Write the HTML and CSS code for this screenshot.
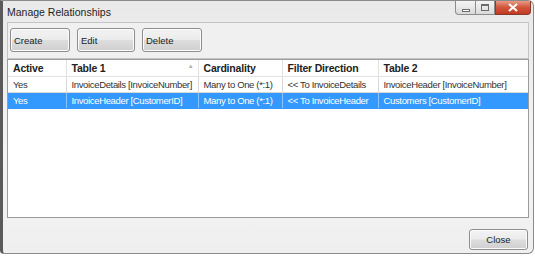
FILE: index.html
```html
<!DOCTYPE html>
<html lang="en">
  <head>
    <meta charset="UTF-8" />
    <title>Manage Relationships</title>
    <link rel="stylesheet" href="styles.css">
  </head>
  <body>
    <div class="window">
      <div class="titlebar">
        <span class="title">Manage Relationships</span>
        <div class="controls">
          <span class="ctl min"><i></i></span>
          <span class="ctl max"><i></i></span>
          <span class="ctl close">
            <svg width="12" height="9" viewBox="0 0 12 9"><path d="M2 1 L10 8 M10 1 L2 8" stroke="#fff" stroke-width="2.2"/></svg>
          </span>
        </div>
      </div>

      <div class="toolbar">
        <button class="btn">Create</button>
        <button class="btn narrow">Edit</button>
        <button class="btn">Delete</button>
      </div>

      <div class="grid">
        <table>
          <thead>
            <tr>
              <th class="c-active">Active</th>
              <th class="c-t1">Table 1 <span class="sort">&#9650;</span></th>
              <th class="c-card">Cardinality</th>
              <th class="c-filter">Filter Direction</th>
              <th class="c-t2">Table 2</th>
            </tr>
          </thead>
          <tbody>
            <tr>
              <td>Yes</td>
              <td>InvoiceDetails [InvoiceNumber]</td>
              <td>Many to One (*:1)</td>
              <td>&lt;&lt; To InvoiceDetails</td>
              <td>InvoiceHeader [InvoiceNumber]</td>
            </tr>
            <tr class="selected">
              <td>Yes</td>
              <td>InvoiceHeader [CustomerID]</td>
              <td>Many to One (*:1)</td>
              <td>&lt;&lt; To InvoiceHeader</td>
              <td>Customers [CustomerID]</td>
            </tr>
          </tbody>
        </table>
      </div>

      <div class="footer">
        <button class="btn close-btn">Close</button>
      </div>
    </div>
  </body>
</html>
```

FILE: styles.css
```css
* {
  margin: 0;
  padding: 0;
  box-sizing: border-box;
}

body {
  font-family: 'Liberation Sans', Arial, sans-serif;
  background: #ffffff;
  width: 535px;
  height: 258px;
  overflow: hidden;
  color: #222;
}

.window {
  width: 534px;
  height: 254px;
  background: linear-gradient(180deg, #e9e9e9 0%, #f4f4f4 60%, #efefef 100%);
  border: 1px solid #8a8a8a;
  border-left: 3px solid #5a5a5a;
  border-radius: 0 6px 6px 4px;
  display: flex;
  flex-direction: column;
  padding: 0 4px 2px 4px;
}

.titlebar {
  height: 21px;
  display: flex;
  align-items: flex-start;
  justify-content: space-between;
}

.title {
  font-size: 10.5px;
  margin: 5px 0 0 0;
  color: #1e1e1e;
}

.controls {
  display: flex;
  margin-right: -2px;
}

.ctl {
  height: 14px;
  border: 1px solid #8c8c8c;
  border-top: none;
  background: linear-gradient(180deg, #f4f4f4, #dadada);
  display: flex;
  align-items: center;
  justify-content: center;
}

.ctl.min {
  width: 21px;
  border-radius: 0 0 0 4px;
}

.ctl.min i {
  width: 8px;
  height: 3px;
  border: 1px solid #6b6b6b;
  background: #fff;
  margin-top: 5px;
}

.ctl.max {
  width: 19px;
  border-left: none;
}

.ctl.max i {
  width: 8px;
  height: 7px;
  border: 1px solid #6b6b6b;
  border-top-width: 2px;
}

.ctl.close {
  width: 36px;
  border: 1px solid #8a3a2a;
  border-top: none;
  border-radius: 0 0 4px 0;
  background: linear-gradient(180deg, #e89a84 0%, #d2553c 50%, #c03a22 100%);
}

.toolbar {
  height: 37px;
  border: 1px solid #c4c4c4;
  background: #f0f0f0;
  display: flex;
  gap: 7px;
  padding: 5px 0 0 2px;
}

.btn {
  font-family: 'Liberation Sans', Arial, sans-serif;
  font-size: 9.5px;
  color: #222;
  width: 60px;
  height: 24px;
  text-align: left;
  padding-left: 3px;
  border: 1px solid #8e8e8e;
  border-radius: 3px;
  background: linear-gradient(180deg, #f3f3f3 0%, #ebebeb 48%, #dddddd 52%, #cfcfcf 100%);
  box-shadow: inset 0 0 0 1px #fbfbfb;
}

.btn.narrow {
  width: 58px;
}

.grid {
  flex: 1;
  background: #fff;
  border: 1px solid #9c9c9c;
}

table {
  border-collapse: collapse;
  width: 100%;
  font-size: 9.5px;
  letter-spacing: -0.35px;
}

th {
  height: 16px;
  text-align: left;
  font-weight: bold;
  font-size: 10.5px;
  letter-spacing: -0.2px;
  padding: 0 5px;
  border-right: 1px solid #e2e2e2;
  border-bottom: 1px solid #e2e2e2;
  white-space: nowrap;
  position: relative;
}

th:last-child {
  border-right: none;
}

.sort {
  position: absolute;
  right: 4px;
  top: 3px;
  font-size: 6px;
  color: #b0b0b0;
}

.c-active { width: 58px; }
.c-t1 { width: 132px; }
.c-card { width: 84px; }
.c-filter { width: 96px; }

td {
  height: 16px;
  padding: 0 5px;
  white-space: nowrap;
  border-right: 1px solid #d8d8d8;
  border-bottom: 1px solid #d8d8d8;
  color: #333;
}

td:last-child {
  border-right: none;
}

tr.selected td {
  background: #3399ff;
  color: #fff;
  border-color: #3399ff;
  border-right-color: #8cc4ff;
}

.footer {
  height: 33px;
  display: flex;
  justify-content: flex-end;
  align-items: flex-end;
  padding: 0 1px 1px 0;
}

.close-btn {
  width: 59px;
  height: 21px;
  text-align: center;
  padding-left: 0;
}
```
